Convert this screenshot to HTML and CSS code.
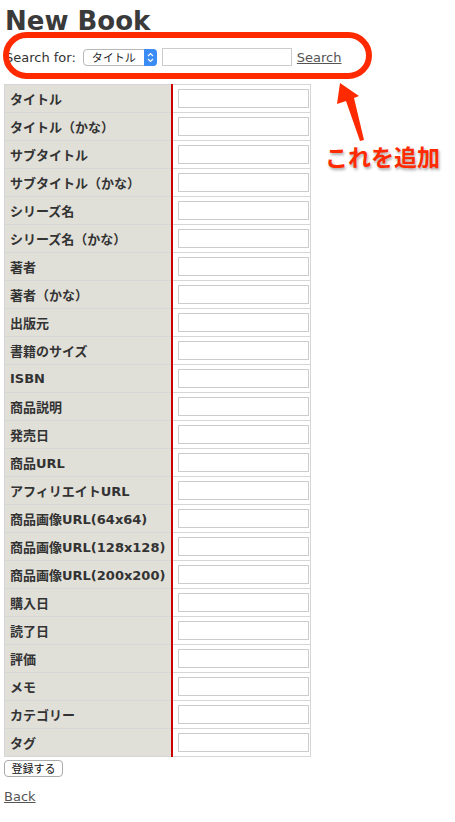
FILE: index.html
```html
<html>
<head>
    <title>New Book</title>
    <link rel="stylesheet" href="styles.css">
</head>
<body>
    <h1>New Book</h1>

    <form class="search-form">
        <label class="search-label">Search for:</label>
        <span class="select-wrap">
            <select class="search-select">
                <option>タイトル</option>
                <option>著者</option>
                <option>ISBN</option>
            </select>
            <span class="select-arrow">
                <svg width="7" height="11" viewBox="0 0 7 11">
                    <path d="M1 4 L3.5 1.5 L6 4 M1 7 L3.5 9.5 L6 7" fill="none" stroke="#fff" stroke-width="1.2"/>
                </svg>
            </span>
        </span>
        <input type="text" class="search-input">
        <a href="#" class="search-link">Search</a>
    </form>

    <table class="book-table">
        <tr><th>タイトル</th><td><input type="text"></td></tr>
        <tr><th>タイトル（かな）</th><td><input type="text"></td></tr>
        <tr><th>サブタイトル</th><td><input type="text"></td></tr>
        <tr><th>サブタイトル（かな）</th><td><input type="text"></td></tr>
        <tr><th>シリーズ名</th><td><input type="text"></td></tr>
        <tr><th>シリーズ名（かな）</th><td><input type="text"></td></tr>
        <tr><th>著者</th><td><input type="text"></td></tr>
        <tr><th>著者（かな）</th><td><input type="text"></td></tr>
        <tr><th>出版元</th><td><input type="text"></td></tr>
        <tr><th>書籍のサイズ</th><td><input type="text"></td></tr>
        <tr><th>ISBN</th><td><input type="text"></td></tr>
        <tr><th>商品説明</th><td><input type="text"></td></tr>
        <tr><th>発売日</th><td><input type="text"></td></tr>
        <tr><th>商品URL</th><td><input type="text"></td></tr>
        <tr><th>アフィリエイトURL</th><td><input type="text"></td></tr>
        <tr><th>商品画像URL(64x64)</th><td><input type="text"></td></tr>
        <tr><th>商品画像URL(128x128)</th><td><input type="text"></td></tr>
        <tr><th>商品画像URL(200x200)</th><td><input type="text"></td></tr>
        <tr><th>購入日</th><td><input type="text"></td></tr>
        <tr><th>読了日</th><td><input type="text"></td></tr>
        <tr><th>評価</th><td><input type="text"></td></tr>
        <tr><th>メモ</th><td><input type="text"></td></tr>
        <tr><th>カテゴリー</th><td><input type="text"></td></tr>
        <tr><th>タグ</th><td><input type="text"></td></tr>
    </table>

    <button class="submit-button">登録する</button>

    <p class="back"><a href="#">Back</a></p>

    <!-- annotation overlay -->
    <div class="note-ring"></div>
    <svg class="note-arrow" width="40" height="64" viewBox="330 80 40 64">
        <polygon points="340,83 359,96 354,98 364,140 360,141 346,101 337,104" fill="#ff2a00"/>
    </svg>
    <div class="note-text">これを追加</div>
</body>
</html>
```

FILE: styles.css
```css
body {
    font-family: "DejaVu Sans", Verdana, "Noto Sans CJK JP", sans-serif;
    font-size: 13px;
    color: #333;
    background-color: #fff;
    margin: 0;
    padding: 0 4px;
    position: relative;
}

h1 {
    font-size: 26px;
    line-height: 32px;
    margin: 0;
    padding: 5px 0 0 1px;
    color: #3a3a3a;
}

.search-form {
    display: flex;
    align-items: center;
    height: 20px;
    margin: 10px 0 0 0;
    padding-left: 1px;
}

.search-label {
    margin-right: 7px;
}

.select-wrap {
    position: relative;
    display: inline-block;
    width: 74px;
    height: 17px;
}

.search-select {
    appearance: none;
    -webkit-appearance: none;
    width: 74px;
    height: 17px;
    margin: 0;
    padding: 0 0 0 8px;
    border: 1px solid #b8b8b8;
    border-radius: 4px;
    background-color: #fff;
    font-family: "Noto Sans CJK JP", sans-serif;
    font-size: 11px;
    line-height: 15px;
    color: #222;
}

.select-arrow {
    position: absolute;
    top: 0;
    right: 0;
    width: 13px;
    height: 17px;
    background-color: #3b8cf5;
    border-radius: 0 4px 4px 0;
    display: flex;
    align-items: center;
    justify-content: center;
}

.search-input {
    width: 130px;
    height: 18px;
    margin: 0 0 0 5px;
    padding: 0 2px;
    box-sizing: border-box;
    border: 1px solid #ccc;
}

.search-link {
    margin-left: 5px;
    color: #555;
}

.book-table {
    margin-top: 17px;
    border-collapse: collapse;
    width: 307px;
}

.book-table th,
.book-table td {
    border: 1px solid #d6d6d6;
    height: 28px;
    padding: 0;
}

.book-table th {
    width: 161px;
    text-align: left;
    padding-left: 5px;
    background-color: #e0dfd8;
    border-right: 2px solid #cc0000;
    font-size: 13px;
    white-space: nowrap;
}

.book-table td {
    padding-left: 5px;
}

.book-table input {
    display: block;
    width: 131px;
    height: 19px;
    box-sizing: border-box;
    margin: 0;
    border: 1px solid #ccc;
}

.submit-button {
    margin-top: 3px;
    height: 17px;
    width: 59px;
    padding: 0;
    font-family: "Noto Sans CJK JP", sans-serif;
    font-size: 11px;
    line-height: 15px;
    color: #111;
    background-color: #fff;
    border: 1px solid #aaa;
    border-radius: 4px;
}

.back {
    margin: 12px 0 0 0;
}

.back a {
    color: #555;
}

.note-ring {
    position: absolute;
    left: 3px;
    top: 32px;
    width: 357px;
    height: 35px;
    border: 6px solid #ff2a00;
    border-radius: 24px;
}

.note-arrow {
    position: absolute;
    left: 330px;
    top: 80px;
}

.note-text {
    position: absolute;
    left: 325px;
    top: 141px;
    font-family: "Noto Sans CJK JP", sans-serif;
    font-weight: bold;
    font-size: 23px;
    line-height: 30px;
    color: #ff2a00;
    -webkit-text-stroke: 4px #fff;
    paint-order: stroke fill;
    text-shadow: 1px 2px 3px rgba(0, 0, 0, 0.35);
}
```
